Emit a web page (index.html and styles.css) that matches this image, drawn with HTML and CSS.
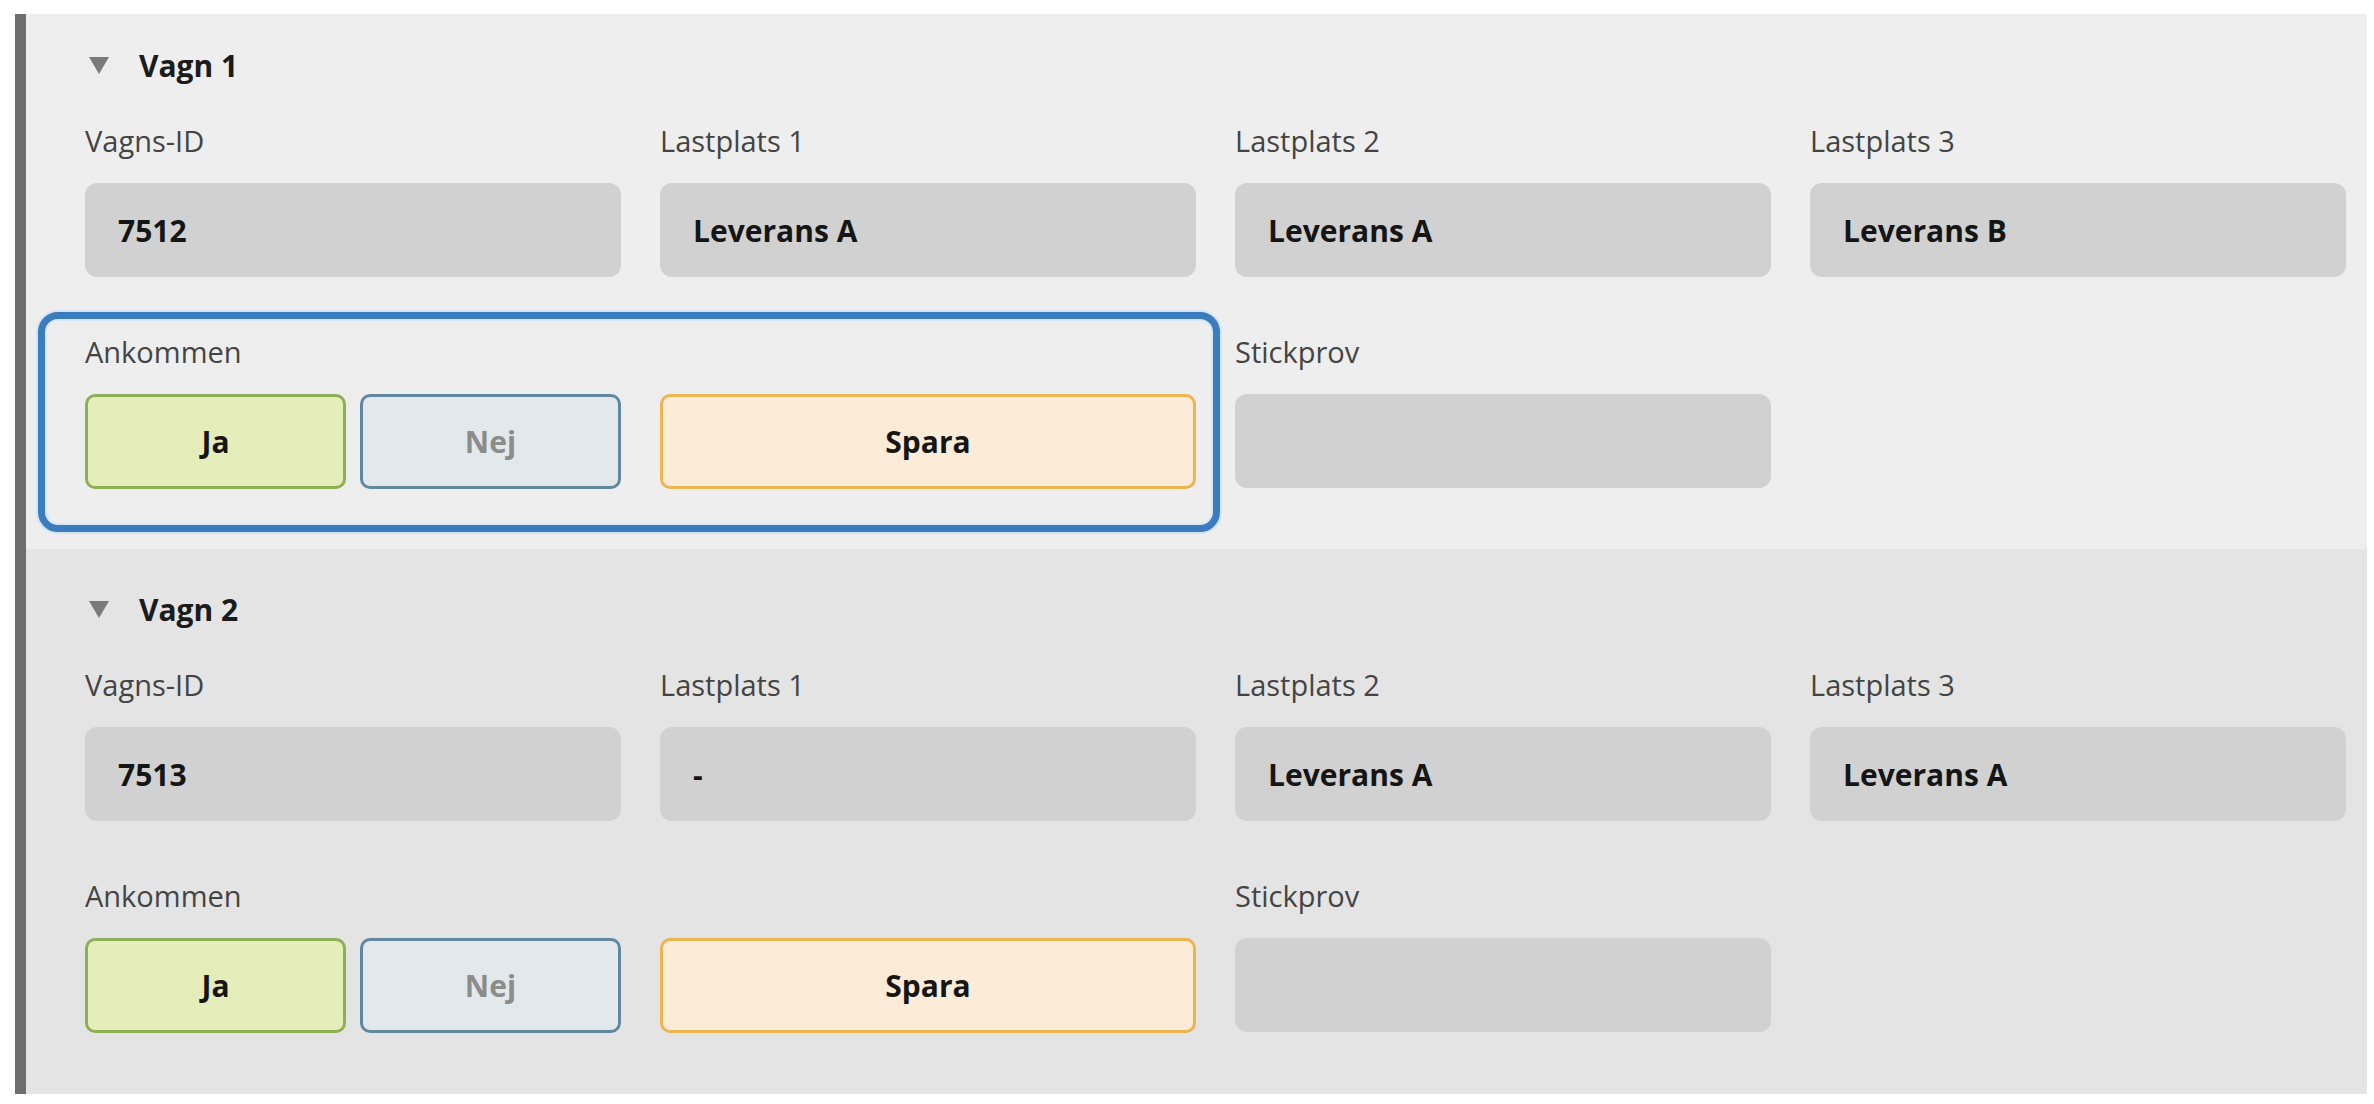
FILE: index.html
```html
<!DOCTYPE html>
<html lang="sv">
  <head>
    <meta charset="UTF-8" />
    <meta name="viewport" content="width=device-width, initial-scale=1.0" />
    <title>Vagnar</title>
    <link rel="stylesheet" href="styles.css">
  </head>
  <body>
    <div class="wagon-list">
      <!--Vagn 1-->
      <section class="wagon wagon-first">
        <div class="wagon-head">
          <svg class="caret" width="22" height="20" viewBox="0 0 22 20"><polygon points="1,2 21,2 11,19" fill="#7a7a7a"/></svg>
          <span>Vagn 1</span>
        </div>
        <div class="fields">
          <div class="field"><label>Vagns-ID</label><div class="value">7512</div></div>
          <div class="field"><label>Lastplats 1</label><div class="value">Leverans A</div></div>
          <div class="field"><label>Lastplats 2</label><div class="value">Leverans A</div></div>
          <div class="field"><label>Lastplats 3</label><div class="value">Leverans B</div></div>

          <div class="field arrival focused">
            <label>Ankommen</label>
            <div class="arrival-buttons">
              <div class="choice">
                <button class="btn btn-yes">Ja</button>
                <button class="btn btn-no">Nej</button>
              </div>
              <button class="btn btn-save">Spara</button>
            </div>
          </div>
          <div class="field"><label>Stickprov</label><div class="value"></div></div>
        </div>
      </section>

      <!--Vagn 2-->
      <section class="wagon wagon-second">
        <div class="wagon-head">
          <svg class="caret" width="22" height="20" viewBox="0 0 22 20"><polygon points="1,2 21,2 11,19" fill="#7a7a7a"/></svg>
          <span>Vagn 2</span>
        </div>
        <div class="fields">
          <div class="field"><label>Vagns-ID</label><div class="value">7513</div></div>
          <div class="field"><label>Lastplats 1</label><div class="value">-</div></div>
          <div class="field"><label>Lastplats 2</label><div class="value">Leverans A</div></div>
          <div class="field"><label>Lastplats 3</label><div class="value">Leverans A</div></div>

          <div class="field arrival">
            <label>Ankommen</label>
            <div class="arrival-buttons">
              <div class="choice">
                <button class="btn btn-yes">Ja</button>
                <button class="btn btn-no">Nej</button>
              </div>
              <button class="btn btn-save">Spara</button>
            </div>
          </div>
          <div class="field"><label>Stickprov</label><div class="value"></div></div>
        </div>
      </section>
    </div>
  </body>
</html>
```

FILE: styles.css
```css
body {
  margin: 0;
  background: #fff;
  font-family: "Open Sans", "Noto Sans", sans-serif;
  color: #444;
}
.wagon-list {
  margin: 14px 7px 0 15px;
  border-left: 11px solid #6e6e6e;
}
/* one wagon block */
.wagon {
  padding: 40px 21px 61px 59px;
  background-color: #e4e4e4;
}
.wagon-first {
  padding-top: 31px;
  padding-bottom: 60px;
  background-color: #eeeeee;
}
.wagon-head {
  display: flex;
  align-items: center;
  gap: 29px;
  height: 40px;
  padding-left: 3px;
  margin-bottom: 36px;
  font-size: 30px;
  font-weight: 700;
  color: #1b1b1b;
}
.caret {
  display: block;
}
/* field grid */
.fields {
  display: grid;
  grid-template-columns: repeat(4, 536px);
  column-gap: 39px;
  row-gap: 55px;
}
.field {
  display: flex;
  flex-direction: column;
  gap: 22px;
}
.field label {
  font-size: 29px;
  line-height: 40px;
  color: #444;
}
.value {
  height: 94px;
  box-sizing: border-box;
  padding-left: 33px;
  display: flex;
  align-items: center;
  background-color: #d1d1d1;
  border-radius: 12px;
  font-size: 30px;
  font-weight: 700;
  color: #151515;
}
/* Ankommen + Spara */
.arrival {
  grid-column: span 2;
  position: relative;
}
.arrival-buttons {
  display: grid;
  grid-template-columns: 536px 536px;
  column-gap: 39px;
}
.choice {
  display: grid;
  grid-template-columns: 1fr 1fr;
  column-gap: 14px;
}
.btn {
  height: 95px;
  box-sizing: border-box;
  border-radius: 10px;
  border: 3px solid;
  font-family: inherit;
  font-size: 30px;
  font-weight: 700;
  color: #151515;
}
.btn-yes {
  background-color: #e5edbb;
  border-color: #8fae55;
}
.btn-no {
  background-color: #e2e8ec;
  border-color: #62889f;
  color: #8c8c8c;
}
.btn-save {
  background-color: #fbebd7;
  border-color: #edb451;
}
/* Focus ring */
.focused::before {
  content: "";
  position: absolute;
  top: -20px;
  left: -47px;
  right: -24px;
  bottom: -43px;
  border: 7px solid #3b7cbf;
  border-radius: 20px;
  box-shadow: 0 0 0 2px #cfe4f6, inset 0 0 0 2px #d6e8f7;
  pointer-events: none;
}
```
